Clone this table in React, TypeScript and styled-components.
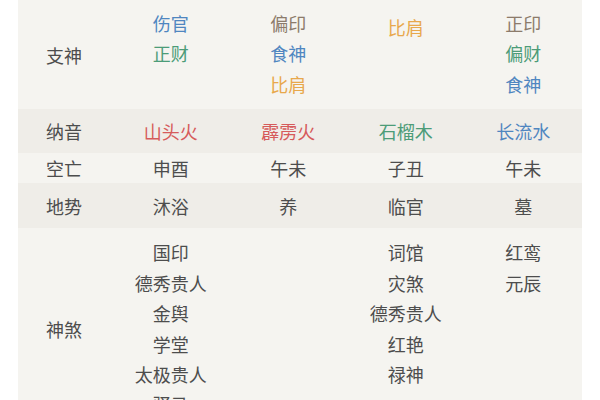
import React from "react";
import styled, { createGlobalStyle } from "styled-components";

const GlobalStyle = createGlobalStyle`
  html, body {
    margin: 0;
    padding: 0;
    background: #ffffff;
    font-family: "Noto Sans CJK SC", "Noto Sans", sans-serif;
  }
`;

const colors: Record<string, string> = {
  blue: "#4f86c0",
  green: "#4c9c78",
  orange: "#e8a84c",
  brown: "#8c7b6b",
  red: "#d65b5b",
  gray: "#4d4d4d",
};

const Table = styled.div`
  width: 564px;
  margin: 0 0 0 18px;
  height: 400px;
  overflow: hidden;
`;

const Row = styled.div<{ $dark?: boolean; $height?: number; $pad?: number }>`
  display: grid;
  grid-template-columns: 94px repeat(4, 1fr);
  background: ${(p) => (p.$dark ? "#efede8" : "#f5f4f0")};
  min-height: ${(p) => p.$height ?? 0}px;
  padding: ${(p) => p.$pad ?? 0}px 0;
  box-sizing: border-box;
`;

const Label = styled.div`
  display: flex;
  align-items: center;
  justify-content: center;
  font-size: 18px;
  color: ${colors.gray};
  padding-right: 2px;
`;

const Cell = styled.div<{ $center?: boolean; $shift?: number }>`
  display: flex;
  flex-direction: column;
  align-items: center;
  justify-content: ${(p) => (p.$center ? "center" : "flex-start")};
  padding-top: ${(p) => p.$shift ?? 0}px;
`;

const Item = styled.span<{ $tone?: string }>`
  font-size: 18px;
  line-height: 30.4px;
  color: ${(p) => colors[p.$tone ?? "gray"]};
  white-space: nowrap;
`;

type Entry = [string, string?];

const zhiShen: Entry[][] = [
  [["伤官", "blue"], ["正财", "green"]],
  [["偏印", "brown"], ["食神", "blue"], ["比肩", "orange"]],
  [["比肩", "orange"]],
  [["正印", "brown"], ["偏财", "green"], ["食神", "blue"]],
];

const naYin: Entry[] = [
  ["山头火", "red"],
  ["霹雳火", "red"],
  ["石榴木", "green"],
  ["长流水", "blue"],
];

const kongWang = ["申酉", "午未", "子丑", "午未"];
const diShi = ["沐浴", "养", "临官", "墓"];

const shenSha: string[][] = [
  ["国印", "德秀贵人", "金舆", "学堂", "太极贵人", "驿马"],
  [],
  ["词馆", "灾煞", "德秀贵人", "红艳", "禄神"],
  ["红鸾", "元辰"],
];

export default function App() {
  return (
    <>
      <GlobalStyle />
      <Table>
        <Row $height={109} $pad={8}>
          <Label>支神</Label>
          {zhiShen.map((col, i) => (
            <Cell key={i} $shift={i === 2 ? 4 : 0}>
              {col.map(([t, tone], j) => (
                <Item key={j} $tone={tone}>
                  {t}
                </Item>
              ))}
            </Cell>
          ))}
        </Row>
        <Row $dark $height={44}>
          <Label>纳音</Label>
          {naYin.map(([t, tone], i) => (
            <Cell key={i} $center>
              <Item $tone={tone}>{t}</Item>
            </Cell>
          ))}
        </Row>
        <Row $height={30}>
          <Label>空亡</Label>
          {kongWang.map((t, i) => (
            <Cell key={i} $center>
              <Item>{t}</Item>
            </Cell>
          ))}
        </Row>
        <Row $dark $height={45}>
          <Label>地势</Label>
          {diShi.map((t, i) => (
            <Cell key={i} $center>
              <Item>{t}</Item>
            </Cell>
          ))}
        </Row>
        <Row $pad={9}>
          <Label>神煞</Label>
          {shenSha.map((col, i) => (
            <Cell key={i}>
              {col.map((t, j) => (
                <Item key={j}>{t}</Item>
              ))}
            </Cell>
          ))}
        </Row>
      </Table>
    </>
  );
}
